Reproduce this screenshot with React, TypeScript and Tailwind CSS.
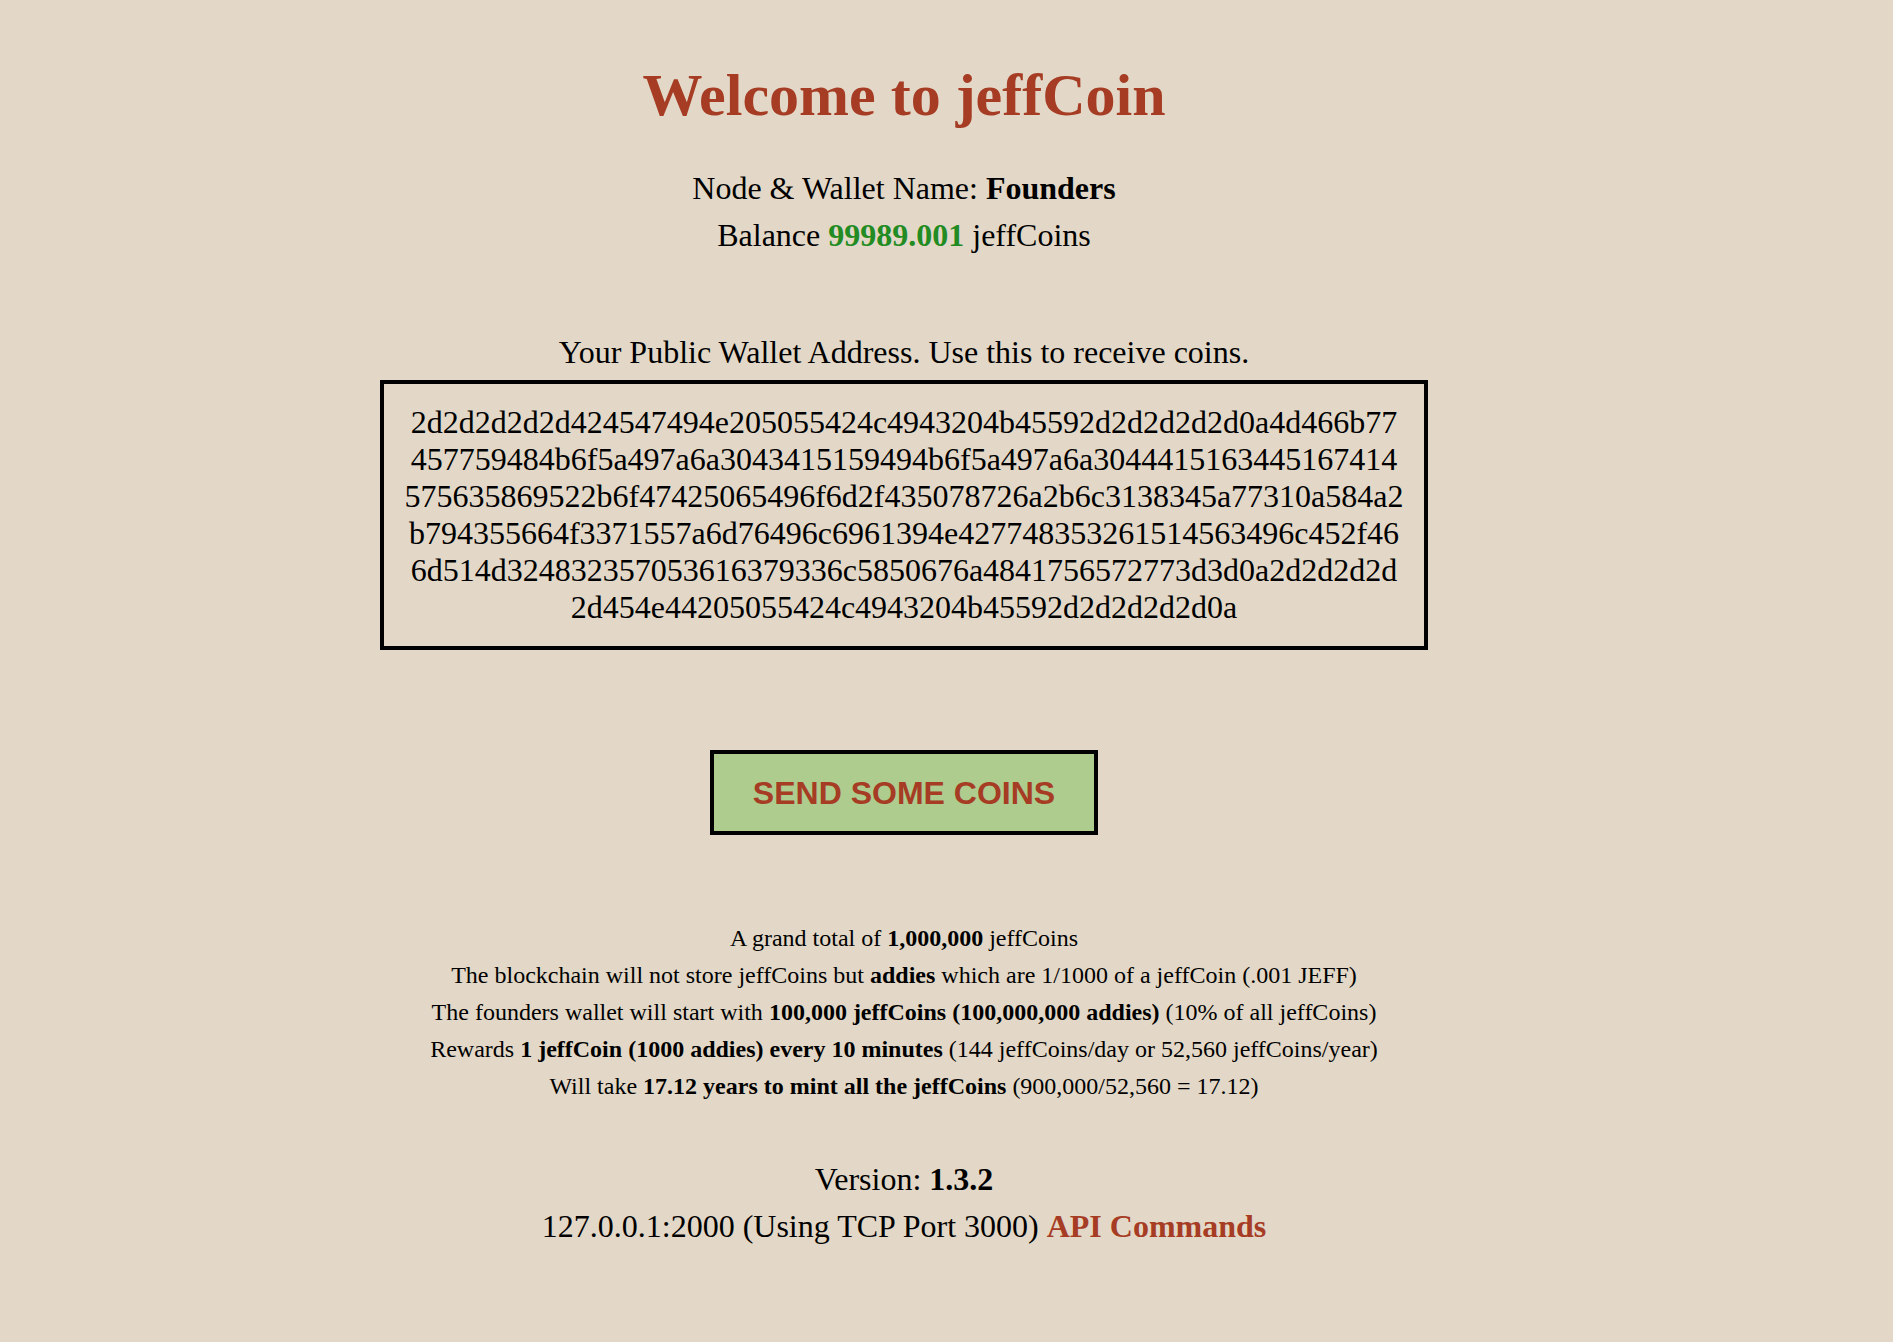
import React from "react";

const ADDRESS_LINES = [
  "2d2d2d2d2d424547494e205055424c4943204b45592d2d2d2d2d0a4d466b77",
  "457759484b6f5a497a6a3043415159494b6f5a497a6a3044415163445167414",
  "575635869522b6f47425065496f6d2f435078726a2b6c3138345a77310a584a2",
  "b794355664f3371557a6d76496c6961394e427748353261514563496c452f46",
  "6d514d324832357053616379336c5850676a4841756572773d3d0a2d2d2d2d",
  "2d454e44205055424c4943204b45592d2d2d2d2d0a",
];

export default function App() {
  return (
    <div className="min-h-[1342px] w-full bg-[#e3d8c7] text-black font-['Liberation_Serif','Times_New_Roman',serif]">
      <div className="flex flex-col items-center pr-[85px] text-center">
        {/* Header */}
        <h1 className="mt-[60px] text-[60px] leading-[70px] font-bold text-[#a63c24]">
          Welcome to jeffCoin
        </h1>
        <div className="mt-[35px] text-[32px] leading-[47px]">
          Node &amp; Wallet Name: <b>Founders</b>
        </div>
        <div className="text-[32px] leading-[47px]">
          Balance <b className="text-[#228b22]">99989.001</b> jeffCoins
        </div>

        {/* Wallet address */}
        <div className="mt-[75px] text-[32px] leading-[37px]">
          Your Public Wallet Address. Use this to receive coins.
        </div>
        <div className="mt-[9px] w-[1048px] border-4 border-black pt-[20px] pb-[20px] text-[32px] leading-[37px]">
          {ADDRESS_LINES.map((line) => (
            <div key={line} className="whitespace-nowrap">
              {line}
            </div>
          ))}
        </div>

        {/* Send button */}
        <button className="mt-[100px] flex h-[85px] w-[388px] items-center justify-center border-4 border-black bg-[#adcc8e] font-['Liberation_Sans',Arial,sans-serif] text-[32px] font-bold text-[#a63c24]">
          SEND SOME COINS
        </button>

        {/* Coin facts */}
        <div className="mt-[85px] text-[24px] leading-[37px]">
          <div>
            A grand total of <b>1,000,000</b> jeffCoins
          </div>
          <div>
            The blockchain will not store jeffCoins but <b>addies</b> which are 1/1000 of a jeffCoin (.001 JEFF)
          </div>
          <div>
            The founders wallet will start with <b>100,000 jeffCoins (100,000,000 addies)</b> (10% of all jeffCoins)
          </div>
          <div>
            Rewards <b>1 jeffCoin (1000 addies) every 10 minutes</b> (144 jeffCoins/day or 52,560 jeffCoins/year)
          </div>
          <div>
            Will take <b>17.12 years to mint all the jeffCoins</b> (900,000/52,560 = 17.12)
          </div>
        </div>

        {/* Footer */}
        <div className="mt-[51px] text-[32px] leading-[47px]">
          Version: <b>1.3.2</b>
        </div>
        <div className="text-[32px] leading-[47px]">
          127.0.0.1:2000 (Using TCP Port 3000){" "}
          <a href="#" className="font-bold text-[#a63c24]">
            API Commands
          </a>
        </div>
      </div>
    </div>
  );
}
